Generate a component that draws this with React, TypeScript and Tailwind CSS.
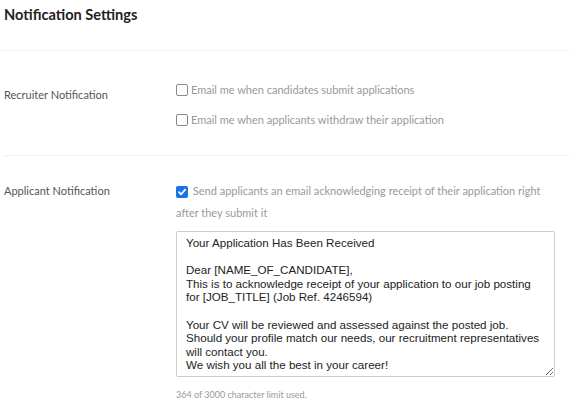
import React from "react";

const body = `Your Application Has Been Received

Dear [NAME_OF_CANDIDATE],
This is to acknowledge receipt of your application to our job posting
for [JOB_TITLE] (Job Ref. 4246594)

Your CV will be reviewed and assessed against the posted job.
Should your profile match our needs, our recruitment representatives
will contact you.
We wish you all the best in your career!`;

function Box({ checked }: { checked?: boolean }) {
  if (checked) {
    return (
      <span className="inline-flex w-[12px] h-[12px] rounded-[2px] bg-[#1a73e8] items-center justify-center align-[-2px] mr-[2px]">
        <svg width="10" height="10" viewBox="0 0 12 12">
          <path d="M2.3 6.2 L4.9 8.7 L9.8 3.2" fill="none" stroke="white" strokeWidth="2.2" strokeLinecap="round" strokeLinejoin="round" />
        </svg>
      </span>
    );
  }
  return <span className="inline-block w-[12px] h-[12px] rounded-[2px] border border-[#888] bg-white" />;
}

export default function App() {
  return (
    <div className="w-[570px] h-[411px] bg-white overflow-hidden font-['Lato',sans-serif]">
      <div className="pl-[4px] pt-[6px] h-[50px]">
        <h1 className="text-[14.6px] font-bold text-[#222] leading-[18px]">Notification Settings</h1>
      </div>
      <div className="h-px bg-[#f2f2f2]" />
      <div className="flex h-[104px] pt-[31px]">
        <div className="w-[176px] pl-[4px] pt-[5px] text-[11px] text-[#555] leading-[16px]">Recruiter Notification</div>
        <div className="flex flex-col gap-[14px] text-[11px] text-[#999] leading-[16px]">
          <div className="flex items-center gap-[3px]">
            <Box />
            <span>Email me when candidates submit applications</span>
          </div>
          <div className="flex items-center gap-[3px]">
            <Box />
            <span>Email me when applicants withdraw their application</span>
          </div>
        </div>
      </div>
      <div className="h-px bg-[#f2f2f2] ml-[3px]" />
      <div className="flex pt-[24px]">
        <div className="w-[176px] pl-[4px] text-[11px] text-[#555] leading-[22px]">Applicant Notification</div>
        <div className="w-[378px]">
          <div className="text-[11px] text-[#999] leading-[22px]">
            <Box checked /> Send applicants an email acknowledging receipt of their application right after they submit it
          </div>
          <textarea
            wrap="off"
            className="mt-[7px] block w-[379px] h-[146px] border border-[#ccc] rounded-[2px] pl-[9px] pr-[6px] pt-[4px] text-[11.6px] text-[#222] font-['Liberation_Sans',Arial,sans-serif] leading-[13.6px] resize-y outline-none overflow-hidden"
            defaultValue={body}
          />
          <div className="mt-[12px] text-[9px] text-[#999] leading-[12px]">364 of 3000 character limit used.</div>
        </div>
      </div>
    </div>
  );
}
